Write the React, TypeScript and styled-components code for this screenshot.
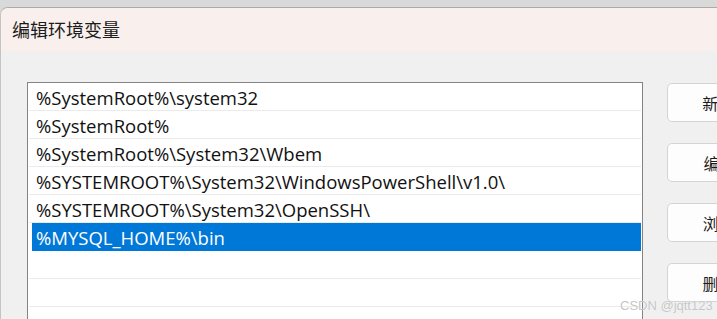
import styled, { createGlobalStyle } from "styled-components";

const GlobalStyle = createGlobalStyle`
  html, body {
    margin: 0;
    padding: 0;
    background: #dedede;
    overflow: hidden;
  }
  * {
    box-sizing: border-box;
  }
`;

const paths = [
  "%SystemRoot%\\system32",
  "%SystemRoot%",
  "%SystemRoot%\\System32\\Wbem",
  "%SYSTEMROOT%\\System32\\WindowsPowerShell\\v1.0\\",
  "%SYSTEMROOT%\\System32\\OpenSSH\\",
  "%MYSQL_HOME%\\bin",
  "",
  "",
  "",
];

const buttons = ["新建(N)", "编辑(E)", "浏览(B)", "删除(D)"];

const App = () => {
  const selected = 5;

  return (
    <Screen>
      <GlobalStyle />
      <Window>
        <TitleBar>
          <Title>编辑环境变量</Title>
        </TitleBar>
        <Body>
          <ListBox>
            {paths.map((p, i) => (
              <Row key={i} selected={i === selected}>
                <RowText>{p}</RowText>
              </Row>
            ))}
          </ListBox>
          <Buttons>
            {buttons.map((b) => (
              <Button key={b}>{b}</Button>
            ))}
          </Buttons>
        </Body>
      </Window>
      <Watermark>CSDN @jqtt123</Watermark>
    </Screen>
  );
};

export default App;

const Screen = styled.div`
  position: relative;
  width: 717px;
  height: 319px;
  padding-top: 7px;
  background: linear-gradient(#d9d9d9, #e2e2e2);
  overflow: hidden;
`;

const Window = styled.div`
  height: 100%;
  width: 740px;
  border-top: 1px solid #ababab;
  border-left: 1px solid #c4c4c4;
  border-top-left-radius: 8px;
  background: #f0f0f0;
  overflow: hidden;
`;

const TitleBar = styled.div`
  height: 43px;
  display: flex;
  align-items: center;
  padding-left: 11px;
  background: #f9f0ed;
`;

const Title = styled.div`
  font-family: "Noto Sans CJK SC", sans-serif;
  font-size: 18px;
  color: #1b1b1b;
  padding-bottom: 1px;
`;

const Body = styled.div`
  display: flex;
  align-items: flex-start;
  gap: 24px;
  padding: 31px 0 0 26px;
`;

const ListBox = styled.div`
  width: 616px;
  height: 260px;
  flex-shrink: 0;
  background: #ffffff;
  border: 1px solid #848484;
  padding-right: 1px;
`;

const Row = styled.div<{ selected?: boolean }>`
  height: 28px;
  margin-left: 1px;
  display: flex;
  align-items: center;
  padding-left: 7px;
  border-bottom: ${(p) => (p.selected ? "none" : "1px solid #ebebeb")};
  background: ${(p) =>
    p.selected
      ? "linear-gradient(to right, transparent 3px, #0078d7 3px)"
      : "transparent"};
  color: ${(p) => (p.selected ? "#ffffff" : "#111111")};
`;

const RowText = styled.span`
  font-family: "Open Sans", "Noto Sans", sans-serif;
  font-size: 18.5px;
  white-space: nowrap;
  padding-top: 1px;
`;

const Buttons = styled.div`
  display: flex;
  flex-direction: column;
  gap: 21px;
  padding-top: 1px;
`;

const Button = styled.div`
  width: 125px;
  height: 39px;
  display: flex;
  align-items: center;
  justify-content: center;
  background: #fdfdfd;
  border: 1px solid #d4d4d4;
  border-radius: 5px;
  font-family: "Noto Sans CJK SC", sans-serif;
  font-size: 16px;
  color: #1b1b1b;
`;

const Watermark = styled.div`
  position: absolute;
  left: 620px;
  top: 298px;
  font-family: "Liberation Sans", sans-serif;
  font-size: 13px;
  color: #c6c6c6;
  text-shadow: 0 0 1px #ffffff;
`;
